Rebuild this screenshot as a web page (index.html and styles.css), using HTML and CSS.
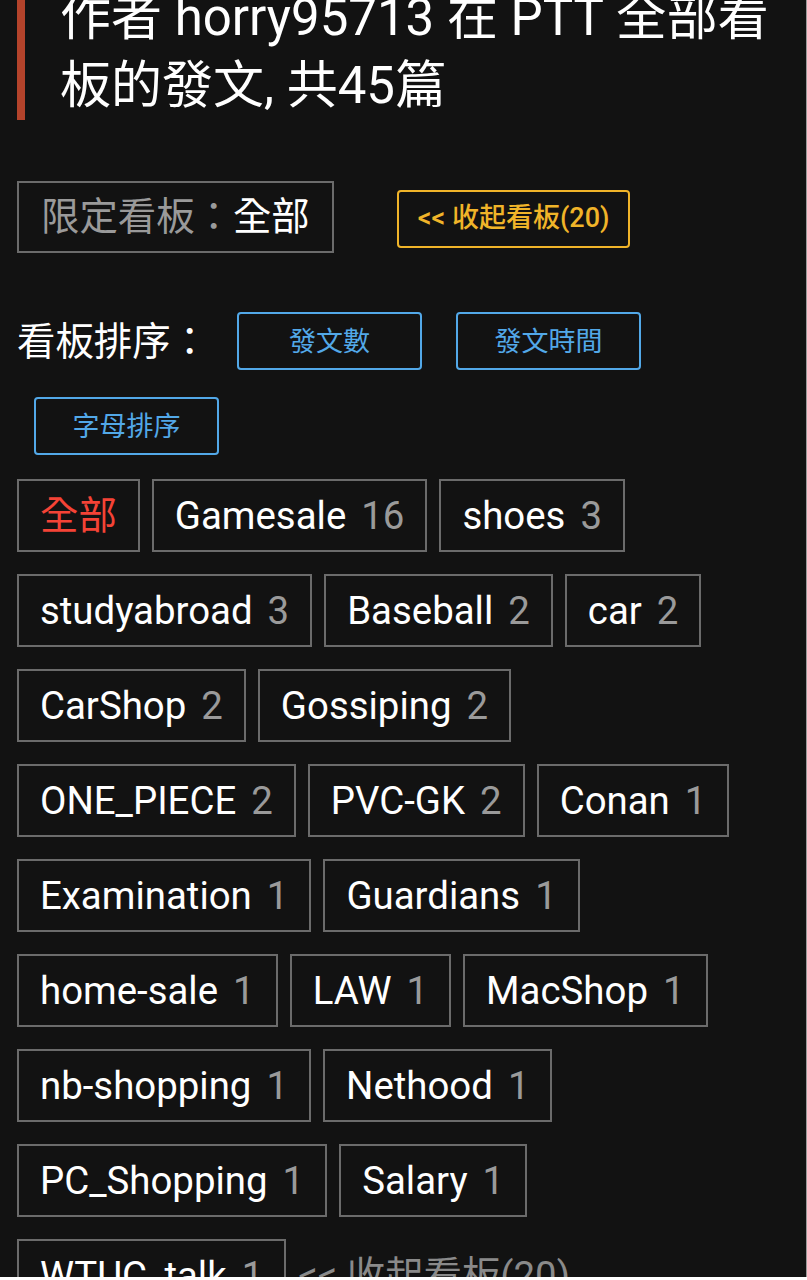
FILE: index.html
```html
<!DOCTYPE html>
<html lang="zh-Hant">
<head>
    <meta charset="UTF-8">
    <meta name="viewport" content="width=device-width, initial-scale=1.0">
    <title>horry95713 的發文</title>
    <link rel="stylesheet" href="styles.css">
</head>
<body>
    <div class="page">
        <h1 class="title">作者 horry95713 在 PTT 全部看板的發文, 共45篇</h1>

        <div class="filter-row">
            <div class="filter-box"><span class="muted">限定看板：</span>全部</div>
            <a href="#" class="btn-fold">&lt;&lt; 收起看板(20)</a>
        </div>

        <div class="sort-row">
            <span class="sort-label">看板排序：</span>
            <button class="btn-sort">發文數</button>
            <button class="btn-sort">發文時間</button>
            <button class="btn-sort">字母排序</button>
        </div>

        <div class="board-list">
            <a href="#" class="board active">全部</a>
            <a href="#" class="board">Gamesale<span class="count">16</span></a>
            <a href="#" class="board">shoes<span class="count">3</span></a>
            <a href="#" class="board">studyabroad<span class="count">3</span></a>
            <a href="#" class="board">Baseball<span class="count">2</span></a>
            <a href="#" class="board">car<span class="count">2</span></a>
            <a href="#" class="board">CarShop<span class="count">2</span></a>
            <a href="#" class="board">Gossiping<span class="count">2</span></a>
            <a href="#" class="board">ONE_PIECE<span class="count">2</span></a>
            <a href="#" class="board">PVC-GK<span class="count">2</span></a>
            <a href="#" class="board">Conan<span class="count">1</span></a>
            <a href="#" class="board">Examination<span class="count">1</span></a>
            <a href="#" class="board">Guardians<span class="count">1</span></a>
            <a href="#" class="board">home-sale<span class="count">1</span></a>
            <a href="#" class="board">LAW<span class="count">1</span></a>
            <a href="#" class="board">MacShop<span class="count">1</span></a>
            <a href="#" class="board">nb-shopping<span class="count">1</span></a>
            <a href="#" class="board">Nethood<span class="count">1</span></a>
            <a href="#" class="board">PC_Shopping<span class="count">1</span></a>
            <a href="#" class="board">Salary<span class="count">1</span></a>
            <a href="#" class="board">WTUC_talk<span class="count">1</span></a>
            <a href="#" class="fold-link">&lt;&lt; 收起看板(20)</a>
        </div>
    </div>
</body>
</html>
```

FILE: styles.css
```css
* {
  margin: 0;
  padding: 0;
  box-sizing: border-box;
}
html {
  background-color: #ffffff;
}
body {
  font-family: Roboto, "Noto Sans CJK TC", sans-serif;
  color: #ffffff;
}
a {
  text-decoration: none;
}

.page {
  width: 807px;
  height: 1277px;
  overflow: hidden;
  padding: 0 17px;
  background-color: #121212;
  border-right: 1px solid #9a9a9a;
}

/* page heading with the red bar */
.title {
  margin-top: -16px;
  border-left: 8px solid #b3432b;
  padding-left: 35px;
  font-size: 51px;
  font-weight: normal;
  line-height: 68px;
}

.filter-row {
  display: flex;
  align-items: center;
  margin-top: 61px;
}
.filter-box {
  border: 2px solid #6b6b6b;
  padding: 12px 22px;
  font-size: 38.4px;
  line-height: 44px;
}
.filter-box .muted {
  color: #9a9a9a;
}
.btn-fold {
  margin-left: 63px;
  margin-top: 4px;
  padding: 0 19px;
  height: 58px;
  line-height: 53px;
  border: 2px solid #f0b429;
  border-radius: 4px;
  color: #f0b429;
  font-size: 27px;
  font-weight: 500;
}

.sort-row {
  display: flex;
  flex-wrap: wrap;
  align-items: center;
  row-gap: 27px;
  margin-top: 59px;
}
.sort-label {
  font-size: 38.4px;
  line-height: 45px;
  margin-right: 11px;
}
.btn-sort {
  width: 185px;
  height: 58px;
  margin: 0 17px;
  padding-bottom: 3px;
  border: 2px solid #52a8e8;
  border-radius: 4px;
  background: none;
  color: #52a8e8;
  font-family: Roboto, "Noto Sans CJK TC", sans-serif;
  font-size: 27px;
  cursor: pointer;
}

/* board tags */
.board-list {
  display: flex;
  flex-wrap: wrap;
  gap: 22px 12px;
  margin-top: 24px;
}
.board {
  border: 2px solid #6b6b6b;
  padding: 12px 21px;
  font-size: 38.4px;
  line-height: 45px;
  color: #ffffff;
}
.board.active {
  color: #f44336;
}
.board .count {
  margin-left: 15px;
  color: #9a9a9a;
}
.fold-link {
  align-self: center;
  font-size: 38.4px;
  line-height: 45px;
  color: #8a8a8a;
}
```
